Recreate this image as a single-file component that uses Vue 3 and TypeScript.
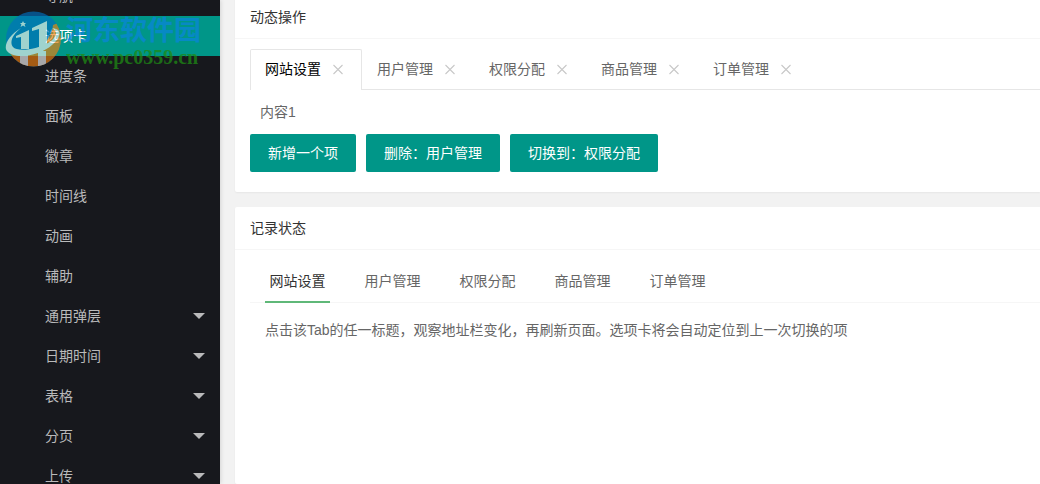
<script setup lang="ts">
import { ref } from 'vue'

interface MenuItem {
  label: string
  group?: boolean
}

const menu: MenuItem[] = [
  { label: '导航' },
  { label: '选项卡' },
  { label: '进度条' },
  { label: '面板' },
  { label: '徽章' },
  { label: '时间线' },
  { label: '动画' },
  { label: '辅助' },
  { label: '通用弹层', group: true },
  { label: '日期时间', group: true },
  { label: '表格', group: true },
  { label: '分页', group: true },
  { label: '上传', group: true },
]
const currentMenu = ref('选项卡')

const tabs = ['网站设置', '用户管理', '权限分配', '商品管理', '订单管理']
const dynamicTabs = ref(tabs.map((title, i) => ({ title, id: i + 1 })))
const dynamicId = ref(1)
const stateTab = ref(0)

function removeTab(id: number) {
  dynamicTabs.value = dynamicTabs.value.filter((t) => t.id !== id)
}
function addTab() {
  const id = Date.now()
  dynamicTabs.value.push({ title: '新选项', id })
}
</script>

<template>
  <div class="layout">
    <nav class="side">
      <ul class="menu">
        <li v-for="item in menu" :key="item.label">
          <a
            href="#"
            class="menu-link"
            :class="{ active: item.label === currentMenu }"
            @click.prevent="currentMenu = item.label"
          >
            <span>{{ item.label }}</span>
            <i v-if="item.group" class="caret"></i>
          </a>
        </li>
      </ul>
    </nav>

    <main class="main">
      <section class="card">
        <h2 class="card-head">动态操作</h2>
        <div class="card-body">
          <div class="tabs">
            <div
              v-for="tab in dynamicTabs"
              :key="tab.id"
              class="tab"
              :class="{ on: tab.id === dynamicId }"
            >
              <button type="button" class="tab-title" @click="dynamicId = tab.id">{{ tab.title }}</button>
              <button type="button" class="tab-close" :aria-label="'关闭' + tab.title" @click="removeTab(tab.id)">
                <svg viewBox="0 0 18 18" width="18" height="18" aria-hidden="true">
                  <path d="M4.5 5 L13.5 14 M13.5 5 L4.5 14" />
                </svg>
              </button>
            </div>
          </div>
          <p class="tab-content">内容{{ dynamicId }}</p>
          <div class="actions">
            <button type="button" class="btn" @click="addTab">新增一个项</button>
            <button type="button" class="btn" @click="removeTab(2)">删除：用户管理</button>
            <button type="button" class="btn" @click="dynamicId = 3">切换到：权限分配</button>
          </div>
        </div>
      </section>

      <section class="card grow">
        <h2 class="card-head">记录状态</h2>
        <div class="card-body">
          <div class="brief">
            <button
              v-for="(title, i) in tabs"
              :key="title"
              type="button"
              class="brief-tab"
              :class="{ on: i === stateTab }"
              @click="stateTab = i"
            >
              <span>{{ title }}</span>
            </button>
          </div>
          <p class="brief-content">点击该Tab的任一标题，观察地址栏变化，再刷新页面。选项卡将会自动定位到上一次切换的项</p>
        </div>
      </section>
    </main>

    <div class="watermark">
      <svg class="mark-logo" viewBox="0 0 58 58" width="58" height="58" aria-hidden="true">
        <defs>
          <clipPath id="disc"><circle cx="28.5" cy="28" r="27.5" /></clipPath>
        </defs>
        <g clip-path="url(#disc)">
          <rect width="58" height="58" fill="#0070c0" />
          <path d="M0 38 C16 48 46 38 48 14 L58 10 V58 H0 Z" fill="#f08010" />
          <path d="M15 42 H23 V58 H15 Z M33 40 H41 V58 H33 Z" fill="#f4f4f4" />
          <path d="M11 25 L24 19 V38 H16 V26 L11 27 Z" fill="#f4f4f4" />
          <path d="M27 17 L42 10 V35 L34 38 V18 L27 20 Z" fill="#f4f4f4" />
        </g>
        <path
          d="M16 17 C4 24 -2 35 2 40 C9 49 35 45 47 34 C56 26 58 18 47 17 C54 21 51 27 43 32 C31 39 12 41 8 36 C4 31 8 23 16 17 Z"
          fill="#f4f4f4"
        />
        <path d="M18 10 L19 12 L21 12 L19.5 13.5 L20.5 16 L18 14.5 L15.5 16 L16.5 13.5 L15 12 L17 12 Z" fill="#f4f4f4" />
      </svg>
      <div class="mark-text">
        <span class="mark-name">河东软件园</span>
        <span class="mark-url">www.pc0359.cn</span>
      </div>
    </div>
  </div>
</template>

<style>
body {
  margin: 0;
  background: #f2f2f2;
}
</style>

<style scoped>
.layout {
  position: relative;
  display: flex;
  height: 100vh;
  overflow: hidden;
  font-family: "Liberation Sans", "Noto Sans CJK SC", sans-serif;
  font-size: 14px;
  line-height: 24px;
  color: #666;
}
button {
  margin: 0;
  padding: 0;
  border: 0;
  background: none;
  font: inherit;
  color: inherit;
  cursor: pointer;
}
p,
h2,
ul {
  margin: 0;
  padding: 0;
}
.side {
  flex: 0 0 220px;
  overflow: hidden;
  background: #17181d;
  box-shadow: 1px 0 4px rgba(0, 0, 0, 0.12);
}
.menu {
  list-style: none;
  margin-top: -24px;
}
.menu-link {
  display: flex;
  align-items: center;
  justify-content: space-between;
  height: 40px;
  padding: 0 15px 0 45px;
  color: #bababb;
  text-decoration: none;
}
.menu-link.active {
  background: #009688;
  color: #fff;
}
.caret {
  border: 6px solid transparent;
  border-top-color: #bababb;
  border-bottom-width: 0;
}
.main {
  flex: 1;
  min-width: 0;
  display: flex;
  flex-direction: column;
  gap: 15px;
  margin-top: -4px;
  padding-left: 15px;
}
.card {
  background: #fff;
  border-radius: 2px 0 0 2px;
  box-shadow: 0 1px 2px rgba(0, 0, 0, 0.05);
}
.grow {
  flex: 1;
}
.card-head {
  height: 42px;
  padding: 0 15px;
  border-bottom: 1px solid #f6f6f6;
  font-size: 14px;
  font-weight: 400;
  line-height: 42px;
  color: #333;
}
.card-body {
  padding: 10px 0 20px 15px;
}
.tabs {
  display: flex;
  height: 40px;
  border-bottom: 1px solid #e6e6e6;
}
.tab {
  display: flex;
  align-items: center;
  gap: 8px;
  box-sizing: border-box;
  height: 41px;
  padding: 0 14px 2px;
  border: 1px solid transparent;
  border-bottom: 0;
  border-radius: 2px 2px 0 0;
}
.tab.on {
  background: #fff;
  border-color: #e6e6e6;
  color: #000;
}
.tab-close {
  display: flex;
}
.tab-close path {
  fill: none;
  stroke: #c8c8c8;
  stroke-width: 1.1;
}
.tab-content {
  padding: 10px 10px 0;
}
.actions {
  display: flex;
  gap: 10px;
  margin-top: 10px;
}
.btn {
  height: 38px;
  padding: 0 18px;
  border-radius: 2px;
  background: #009688;
  color: #fff;
}
.brief {
  display: flex;
  height: 42px;
  border-bottom: 1px solid #f6f6f6;
}
.brief-tab {
  height: 43px;
  padding: 0 15px;
}
.brief-tab span {
  display: block;
  box-sizing: border-box;
  min-width: 65px;
  height: 43px;
  line-height: 42px;
}
.brief-tab.on {
  color: #333;
}
.brief-tab.on span {
  border-bottom: 2px solid #5fb878;
}
.brief-content {
  padding: 15px 15px 0;
}
.watermark {
  position: absolute;
  top: 11px;
  left: 5px;
  display: flex;
  gap: 3px;
  pointer-events: none;
}
.mark-logo {
  opacity: 0.65;
}
.mark-text {
  display: flex;
  flex-direction: column;
  font-weight: 700;
}
.mark-name {
  font-family: "Noto Sans CJK SC", sans-serif;
  font-size: 27px;
  line-height: 36px;
  color: #0a84e0;
  opacity: 0.7;
}
.mark-url {
  font-family: "Liberation Serif", serif;
  font-size: 20px;
  line-height: 20px;
  color: #1e8a14;
  opacity: 0.75;
}
</style>
